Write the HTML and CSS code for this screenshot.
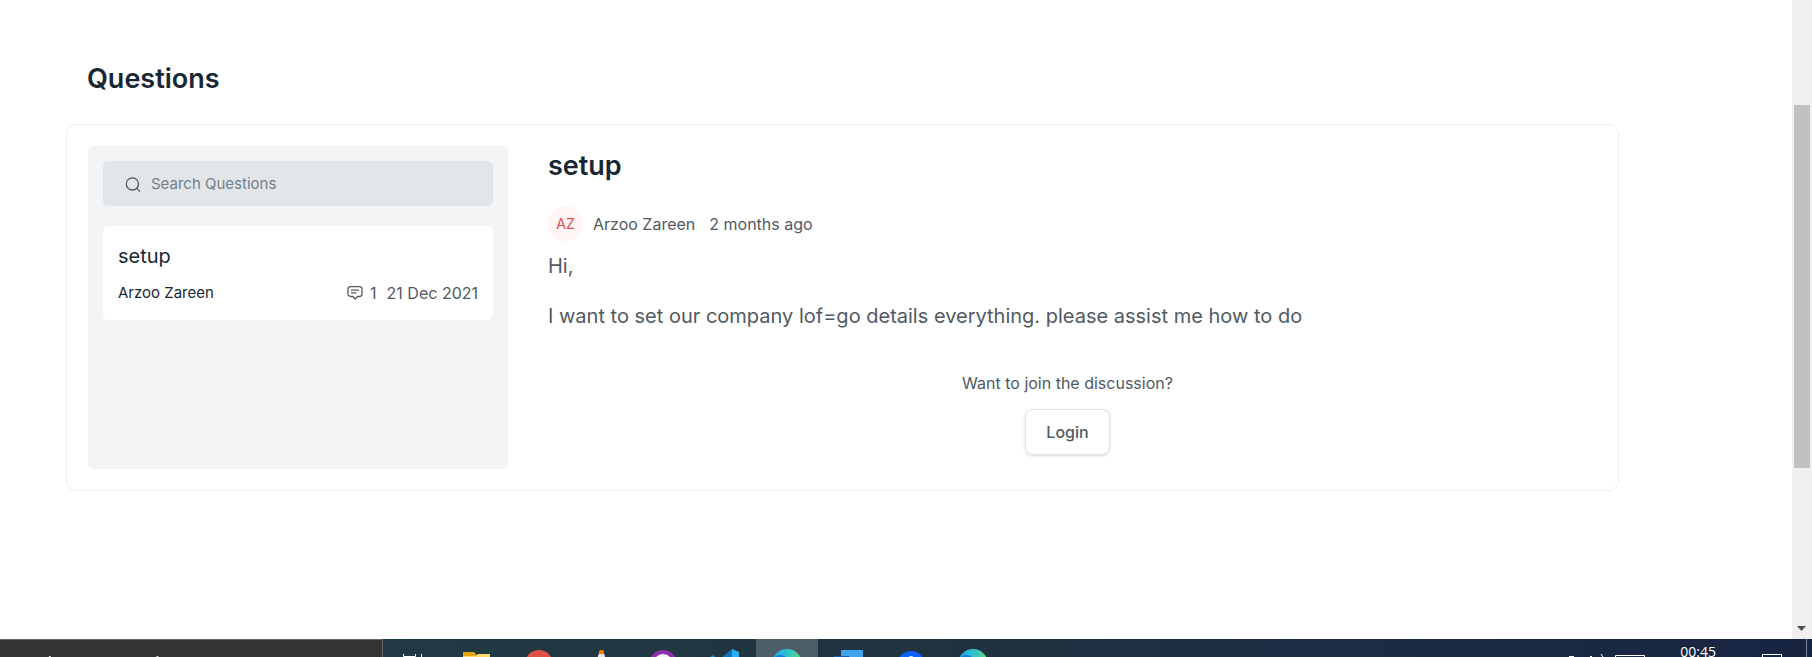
FILE: index.html
```html
<!DOCTYPE html>
<html lang="en">
<head>
<meta charset="utf-8">
<title>Questions</title>
<link rel="stylesheet" href="styles.css">
</head>
<body>
<div class="viewport">
  <main class="page">
    <h1 class="heading page-title">Questions</h1>
    <section class="panel">
      <aside class="sidebar">
        <label class="search">
          <svg class="icon" viewBox="0 0 16 16" aria-hidden="true"><circle cx="7.4" cy="7.9" r="6.1"/><path d="M11.9 12.4 14.6 15.1"/></svg>
          <input class="search-input" type="search" placeholder="Search Questions" aria-label="Search Questions">
        </label>
        <article class="topic">
          <h3 class="topic-title">setup</h3>
          <div class="topic-meta">
            <span class="topic-author">Arzoo Zareen</span>
            <span class="topic-info">
              <svg class="icon" viewBox="0 0 16 16" aria-hidden="true"><path d="M3.6 1.6h8.8c1.5 0 2.6.8 2.6 2.4v5c0 1.6-1.1 2.5-2.6 2.5H10.6L8.2 14 5.8 11.5H3.6C2.1 11.5 1 10.6 1 9V4c0-1.6 1.1-2.4 2.6-2.4ZM4.500 5.200h7M4.500 7.900h4.500"/></svg>
              <span>1</span>
              <time class="topic-date">21 Dec 2021</time>
            </span>
          </div>
        </article>
      </aside>
      <article class="detail">
        <h2 class="heading">setup</h2>
        <div class="byline">
          <span class="avatar">AZ</span>
          <span class="author">Arzoo Zareen</span>
          <time>2 months ago</time>
        </div>
        <div class="message">
          <p>Hi,</p>
          <p>I want to set our company lof=go details everything. please assist me how to do</p>
        </div>
        <div class="join">
          <p>Want to join the discussion?</p>
          <button class="login" type="button">Login</button>
        </div>
      </article>
    </section>
  </main>
  <div class="scrollbar" aria-hidden="true">
    <div class="thumb"></div>
    <svg class="scroll-arrow" viewBox="0 0 10 5"><path d="M0 0h9L4.500 5Z"/></svg>
  </div>
</div>
<footer class="taskbar">
  <div class="task-search"><svg viewBox="0 0 383 18"><path d="M49 16h2v2h-2zM157 16h2v2h-2z"/></svg></div>
  <nav class="apps">
    <button class="app" aria-label="Task view"><svg viewBox="0 0 62 40"><path d="M19.500 15v2.500h12v-2.500M37.500 15v4" fill="none" stroke="#fff"/></svg></button>
    <button class="app" aria-label="Files"><svg viewBox="0 0 62 40"><path d="M17 13h11l2 2v8H17Z" fill="#e5a50a"/><path d="M17 17h12l3-2h12v20H17Z" fill="#ffd766"/></svg></button>
    <button class="app" aria-label="Browser"><svg viewBox="0 0 62 40"><circle cx="31" cy="25" r="14" fill="#dd5144"/></svg></button>
    <button class="app" aria-label="Media player"><svg viewBox="0 0 62 40"><path d="M30 11h3l7 24H22Z" fill="#e4e4e4"/><path d="M30 11h3l1.200 4h-5.400Z" fill="#ef7d0a"/></svg></button>
    <button class="app" aria-label="Purple app"><svg viewBox="0 0 62 40"><circle cx="31" cy="25" r="14" fill="#8e31a8"/><circle cx="31" cy="25" r="10" fill="#f5f2f8"/></svg></button>
    <button class="app" aria-label="Code editor"><svg viewBox="0 0 62 40"><path d="M16 18l3-2 20 18H28Z" fill="#1585c5"/><path d="m26 20 12-10v24H26Z" fill="#0b76bd"/><path d="m38 10 7 3v22h-7Z" fill="#2aaef5"/></svg></button>
    <button class="app active" aria-label="Edge"><svg viewBox="0 0 62 40"><defs><linearGradient id="edge"><stop offset=".2" stop-color="#25aee8"/><stop offset=".65" stop-color="#39c9c0"/><stop offset="1" stop-color="#65dd62"/></linearGradient></defs><circle cx="31" cy="25" r="15" fill="url(#edge)"/><path d="M17 20c3-5 9-5 13-2v10H17Z" fill="#147fca"/></svg></button>
    <button class="app" aria-label="Mail"><svg viewBox="0 0 62 40"><path d="M23 11h22v20H23Z" fill="#43a4ee"/><path d="M16 17h15v18H16Z" fill="#155dac"/></svg></button>
    <button class="app" aria-label="Blue app"><svg viewBox="0 0 62 40"><circle cx="31" cy="26" r="14" fill="#0862fb"/><circle cx="31" cy="20" r="3" fill="#d9e7ff"/></svg></button>
    <button class="app" aria-label="Edge profile"><svg viewBox="0 0 62 40"><circle cx="31" cy="25" r="15" fill="url(#edge)"/><path d="M17 20c3-5 9-5 13-2v10H17Z" fill="#147fca"/></svg></button>
  </nav>
  <div class="tray">
    <svg class="tray-icons" viewBox="0 0 80 18"><path d="M3 17.500h5M24 17.500h2M35 15l2 3M49.500 18v-1.500h29V18" /></svg>
    <time class="clock">00:45</time>
    <svg class="tray-note" viewBox="0 0 20 18"><path d="M.5 18v-2.500h19V18"/></svg>
    <div class="show-desktop"></div>
  </div>
</footer>
</body>
</html>
```
FILE: styles.css
```css
* { box-sizing: border-box; }

body {
  margin: 0;
  height: 100vh;
  display: flex;
  flex-direction: column;
  overflow: hidden;
  background: #fff;
  color: #505a62;
  font: 16px/24px Inter, "Liberation Sans", sans-serif;
}

h1, h2, h3, p { margin: 0; }
button, input { font: inherit; color: inherit; }

.viewport { flex: 1; min-height: 0; display: flex; }

.page { flex: 1; padding: 61px 173px 0 66px; }

.heading {
  color: #192734;
  font-size: 27px;
  font-weight: 600;
  line-height: 36px;
}
.page-title { padding: 0 21px; margin-bottom: 27px; }

.panel {
  display: flex;
  gap: 40px;
  padding: 21px;
  border: 1px solid #ededed;
  border-radius: 10px;
}

.sidebar {
  flex: 0 0 420px;
  padding: 15px;
  background: #f3f4f6;
  border-radius: 5px;
}

.search {
  display: flex;
  align-items: center;
  gap: 10px;
  height: 45px;
  padding: 0 22px;
  background: #e2e6e9;
  border-radius: 5px;
}
.search-input {
  flex: 1;
  min-width: 0;
  padding: 0;
  border: 0;
  outline: 0;
  background: none;
  font-size: 15px;
}
.search-input::placeholder { color: #74808b; }

.icon {
  width: 16px;
  height: 16px;
  fill: none;
  stroke: #505a62;
  stroke-width: 1.3;
  stroke-linecap: round;
  stroke-linejoin: round;
}

.topic {
  margin-top: 20px;
  padding: 15px;
  background: #fff;
  border-radius: 5px;
}
.topic-title {
  margin-bottom: 10px;
  color: #192734;
  font-size: 20px;
  font-weight: 400;
  line-height: 30px;
}
.topic-meta { display: flex; justify-content: space-between; }
.topic-author { color: #192734; font-size: 15px; }
.topic-info { display: flex; align-items: center; gap: 7px; }
.topic-date { margin-left: 3px; }

.detail { flex: 1; padding: 2px 10px 14px 0; }

.byline { display: flex; align-items: center; margin-top: 22px; }
.avatar {
  width: 35px;
  height: 35px;
  margin-right: 10px;
  border-radius: 50%;
  background: #fff5f5;
  color: #e24c4c;
  font-size: 14px;
  line-height: 35px;
  text-align: center;
}
.author { margin-right: 14px; }

.message {
  display: flex;
  flex-direction: column;
  gap: 20px;
  margin-top: 10px;
  font-size: 20px;
  line-height: 30px;
}

.join {
  display: flex;
  flex-direction: column;
  align-items: center;
  gap: 14px;
  margin-top: 40px;
}
.login {
  height: 46px;
  padding: 0 20px;
  border: 1px solid #e4e5e6;
  border-radius: 8px;
  background: #fff;
  box-shadow: 0 1px 3px #00000026;
  font-weight: 500;
}

.scrollbar {
  display: flex;
  flex-direction: column;
  justify-content: space-between;
  align-items: center;
  width: 20px;
  padding: 105px 0 8px;
  background: #f0f0f0;
}
.thumb { width: 16px; height: 69%; background: #c1c1c1; }
.scroll-arrow { width: 10px; height: 5px; fill: #505050; }

.taskbar {
  display: flex;
  align-items: flex-start;
  height: 18px;
  overflow: hidden;
  background: linear-gradient(90deg, #213a43 21%, #20333f 50%, #1c2a45 80%, #172542);
}
.task-search {
  width: 383px;
  height: 40px;
  border: 1px solid #666;
  border-left: 0;
  background: #333;
  fill: #ddd;
}
.apps { display: flex; padding-left: 1px; }
.app { width: 62px; height: 40px; padding: 0; border: 0; background: none; }
.app svg { display: block; width: 62px; height: 40px; }
.active { background: #4d5e66; }

.tray { display: flex; margin-left: auto; }
.tray svg { height: 18px; fill: none; stroke: #fff; }
.tray-icons { width: 80px; margin-right: 34px; }
.clock {
  color: #fff;
  font: 14px/26px "Open Sans", sans-serif;
}
.tray-note { width: 20px; margin-left: 46px; }
.show-desktop {
  width: 6px;
  height: 40px;
  margin-left: 24px;
  border-left: 1px solid #7b8495;
}
```
